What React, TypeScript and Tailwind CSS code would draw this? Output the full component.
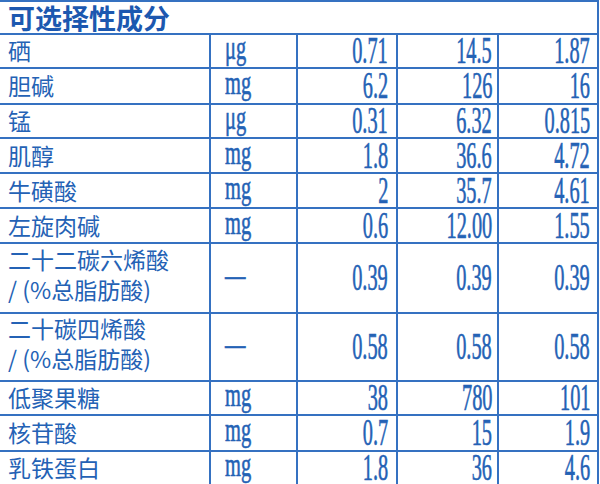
type Row = {
  name: string[];
  unit: string;
  vals: [string, string, string];
  h: string;
};

const rows: Row[] = [
  { name: ["硒"], unit: "μg", vals: ["0.71", "14.5", "1.87"], h: "h-[34px]" },
  { name: ["胆碱"], unit: "mg", vals: ["6.2", "126", "16"], h: "h-[36px]" },
  { name: ["锰"], unit: "μg", vals: ["0.31", "6.32", "0.815"], h: "h-[34px]" },
  { name: ["肌醇"], unit: "mg", vals: ["1.8", "36.6", "4.72"], h: "h-[35px]" },
  { name: ["牛磺酸"], unit: "mg", vals: ["2", "35.7", "4.61"], h: "h-[35px]" },
  { name: ["左旋肉碱"], unit: "mg", vals: ["0.6", "12.00", "1.55"], h: "h-[35px]" },
  { name: ["二十二碳六烯酸", "/ (%总脂肪酸)"], unit: "—", vals: ["0.39", "0.39", "0.39"], h: "h-[70px]" },
  { name: ["二十碳四烯酸", "/ (%总脂肪酸)"], unit: "—", vals: ["0.58", "0.58", "0.58"], h: "h-[68px]" },
  { name: ["低聚果糖"], unit: "mg", vals: ["38", "780", "101"], h: "h-[34px]" },
  { name: ["核苷酸"], unit: "mg", vals: ["0.7", "15", "1.9"], h: "h-[36px]" },
  { name: ["乳铁蛋白"], unit: "mg", vals: ["1.8", "36", "4.6"], h: "h-[34px]" },
];

// Chinese labels and condensed Times-like figures
const cjk = "font-['Noto_Sans_CJK_SC',sans-serif]";
const times = "font-['Liberation_Serif',serif] [-webkit-text-stroke:0.6px_#2462b5] inline-block";

function Num({ v }: { v: string }) {
  return <span className={`${times} text-[37px] leading-[30px] scale-x-[0.55] origin-right`}>{v}</span>;
}

function Unit({ v }: { v: string }) {
  return (
    <span className={`${times} text-[33px] leading-[30px] scale-x-[0.62] origin-left -translate-y-[3px]`}>
      {v}
    </span>
  );
}

export default function App() {
  return (
    <div className="w-[600px] h-[484px] overflow-hidden bg-white text-[#2462b5]">
      <div className="w-[599px] border-t-2 border-r-2 border-[#3571c1]">
        <div className="h-[33px] border-b-2 border-[#3571c1] flex items-center pl-2">
          <span className={`${cjk} text-[27px] font-bold leading-[31px] text-[#1c58b0]`}>
            可选择性成分
          </span>
        </div>
        {rows.map((r, i) => (
          <div
            key={i}
            className={`${r.h} grid grid-cols-[211px_87px_100px_101px_98px] border-b-2 border-[#3571c1]`}
          >
            <div className="border-r-2 border-[#3571c1] flex items-center pl-2">
              <div className={r.name.length > 1 ? "-translate-y-[4px]" : "-translate-y-[1px]"}>
                {r.name.map((n, j) => (
                  <div key={j} className={`${cjk} text-[23px] leading-[30px] whitespace-nowrap`}>
                    {n}
                  </div>
                ))}
              </div>
            </div>
            <div className="border-r-2 border-[#3571c1] flex items-center pl-[14px]">
              <Unit v={r.unit} />
            </div>
            <div className="border-r-2 border-[#3571c1] flex items-center justify-end pr-[8px]">
              <Num v={r.vals[0]} />
            </div>
            <div className="border-r-2 border-[#3571c1] flex items-center justify-end pr-[5px]">
              <Num v={r.vals[1]} />
            </div>
            <div className="flex items-center justify-end pr-[7px]">
              <Num v={r.vals[2]} />
            </div>
          </div>
        ))}
      </div>
    </div>
  );
}
